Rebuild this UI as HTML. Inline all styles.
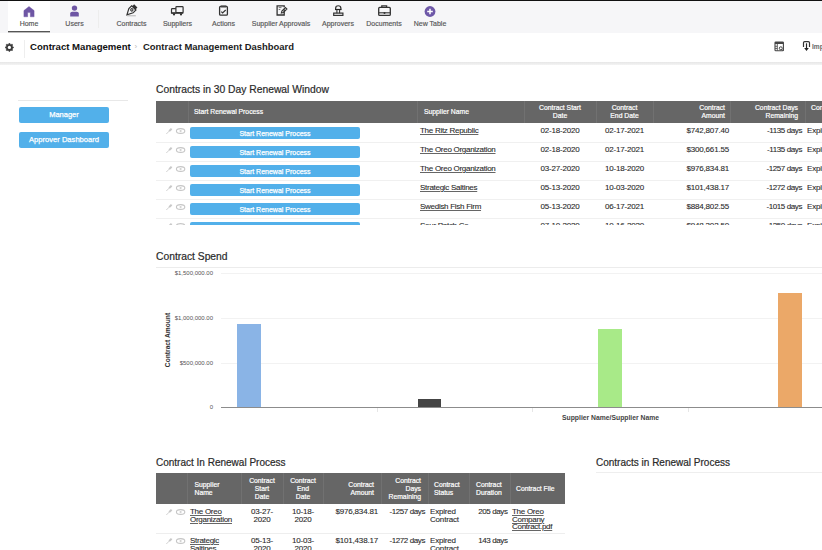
<!DOCTYPE html><html><head><meta charset="utf-8"><style>
*{box-sizing:border-box;margin:0;padding:0}
html,body{width:822px;height:550px;overflow:hidden;background:#fff;font-family:"Liberation Sans",sans-serif;color:#333}
.a{position:absolute}
.nt{position:absolute;font-size:7px;color:#555;-webkit-text-stroke:0.15px #555;white-space:nowrap;text-align:center;width:80px;margin-left:-40px;top:20px;line-height:8px}
.title{position:absolute;font-size:10.3px;color:#2a2a2a;white-space:nowrap;line-height:12px;-webkit-text-stroke:0.2px #2a2a2a}
.btn{position:absolute;background:#52b0ea;color:#fff;border-radius:2px;text-align:center;white-space:nowrap;-webkit-text-stroke:0.25px #fff}
.c{position:absolute;font-size:8px;letter-spacing:-0.18px;color:#2a2a2a;white-space:nowrap;line-height:8px;-webkit-text-stroke:0.1px #2a2a2a}
.d{letter-spacing:-0.4px}
.hc{position:absolute;font-size:6.8px;color:#fff;white-space:nowrap;line-height:8px;-webkit-text-stroke:0.2px #fff}
.u{text-decoration:underline;text-decoration-color:#666;letter-spacing:-0.28px}
.r{text-align:right}
.ctr{text-align:center}
.ax{position:absolute;font-size:6px;color:#555;white-space:nowrap;line-height:7px;text-align:right;width:60px}
</style></head><body>
<div class="a" style="left:0;top:0;width:822px;height:1px;background:#111"></div>
<div class="a" style="left:0;top:1px;width:822px;height:32px;background:#f6f6f8"></div>
<div class="a" style="left:8px;top:1px;width:42px;height:32px;background:#fff"></div>
<div class="a" style="left:8px;top:31px;width:42px;height:1px;background:#555"></div>
<div class="a" style="left:8px;top:32px;width:42px;height:1px;background:#bbb"></div>

<svg class="a" style="left:0;top:0" width="460" height="20" viewBox="0 0 460 20">
<path d="M29 6.4 L34.1 10.6 V16.8 H30.3 V12.6 H27.7 V16.8 H23.9 V10.6 Z" fill="#6e56a4" stroke="#6e56a4" stroke-width="0.4" stroke-linejoin="round"/>
<circle cx="74.5" cy="8.1" r="2.7" fill="#6e56a4"/>
<path d="M70.2 16.4 V13.6 Q70.2 11.8 72.2 11.8 H76.8 Q78.8 11.8 78.8 13.6 V16.4 Z" fill="#6e56a4"/>
<g transform="translate(131.4 10.3) rotate(45)" fill="none" stroke="#333" stroke-width="1.2">
<rect x="-2.3" y="-6.2" width="4.6" height="2.6" fill="#333" stroke="none"/>
<path d="M-3 -3.4 H3 V0.6 L0 6.3 L-3 0.6 Z"/>
<circle cx="0" cy="-0.6" r="1.2" stroke-width="1"/>
</g>
<path d="M127.2 15.8 H135.8" stroke="#aaa" stroke-width="0.9"/>
<rect x="175.9" y="6.7" width="7.2" height="6" rx="0.8" fill="none" stroke="#333" stroke-width="1.2"/>
<path d="M175.9 8.7 H172.3 Q171.5 8.7 171.5 9.5 V13 H175.9" fill="none" stroke="#333" stroke-width="1.2"/>
<rect x="171.3" y="12.4" width="12" height="1.4" fill="#333"/>
<circle cx="174" cy="14.4" r="1.1" fill="#333"/><circle cx="181" cy="14.4" r="1.1" fill="#333"/>
<rect x="219.6" y="6.4" width="7.8" height="8.8" rx="1" fill="none" stroke="#333" stroke-width="1.3"/>
<rect x="220.6" y="5.5" width="5.8" height="1.9" rx="0.5" fill="#444"/>
<path d="M221.3 11.6 L222.6 12.9 L225.7 10" fill="none" stroke="#333" stroke-width="1.2"/>
<path d="M284.2 9.2 V15 H277.1 V5.9 H284.2 V7.2" fill="none" stroke="#333" stroke-width="1.3"/>
<path d="M278.7 7.6 H281.5 M278.7 9.5 H280.3" stroke="#666" stroke-width="0.9"/>
<path d="M281.4 13 L281.9 11 L285.4 7.5 L286.9 9 L283.4 12.5 Z" fill="none" stroke="#333" stroke-width="1.1"/>
<path d="M335.6 9.4 V8.4 A2.65 2.65 0 0 1 340.9 8.4 V9.4" fill="none" stroke="#333" stroke-width="1.2"/>
<path d="M335 9.5 H341.5" stroke="#222" stroke-width="1.2"/>
<path d="M336.9 9.8 V13.2 M339.6 9.8 V13.2" stroke="#333" stroke-width="1.1"/>
<rect x="333.7" y="13.1" width="9.2" height="2.3" fill="none" stroke="#333" stroke-width="1.2"/>
<rect x="378.7" y="7.4" width="11.6" height="8" rx="1" fill="none" stroke="#333" stroke-width="1.3"/>
<path d="M381.8 7.4 V5.9 H386.6 V7.4" fill="none" stroke="#333" stroke-width="1.3"/>
<path d="M378.7 12.8 H390.3" stroke="#333" stroke-width="1.1"/>
<circle cx="384.5" cy="13" r="1" fill="#333"/>
<circle cx="430" cy="11.5" r="5.4" fill="#6e58a8"/>
<path d="M430 8.7 V14.3 M427.2 11.5 H432.8" stroke="#fff" stroke-width="1.5"/>
</svg>
<div class="a" style="left:98px;top:10px;width:1px;height:18px;background:#ededed"></div>

<div class="nt" style="left:29px">Home</div>
<div class="nt" style="left:74.5px">Users</div>
<div class="nt" style="left:131.5px">Contracts</div>
<div class="nt" style="left:177.5px">Suppliers</div>
<div class="nt" style="left:223.5px">Actions</div>
<div class="nt" style="left:281px">Supplier Approvals</div>
<div class="nt" style="left:338px">Approvers</div>
<div class="nt" style="left:384px">Documents</div>
<div class="nt" style="left:430px">New Table</div>
<div class="a" style="left:0;top:62px;width:822px;height:3px;background:linear-gradient(#e6e6e6,#f4f4f4)"></div>
<svg class="a" style="left:0;top:0" width="20" height="60" viewBox="0 0 20 60"><path d="M9.40 43.00 L8.16 44.40 L6.29 44.29 L6.40 46.16 L5.00 47.40 L6.40 48.64 L6.29 50.51 L8.16 50.40 L9.40 51.80 L10.64 50.40 L12.51 50.51 L12.40 48.64 L13.80 47.40 L12.40 46.16 L12.51 44.29 L10.64 44.40 Z" fill="#3a3a3a" stroke="#3a3a3a" stroke-width="0.5" stroke-linejoin="round"/><circle cx="9.4" cy="47.4" r="1.6" fill="#fff"/></svg>
<div class="a" style="left:24px;top:40px;width:1px;height:18px;background:#eee"></div>
<div class="a" style="left:30px;top:41px;font-size:9.6px;font-weight:bold;color:#111;white-space:nowrap;line-height:12px">Contract Management</div>
<div class="a" style="left:134.5px;top:41px;font-size:8px;color:#bbb;line-height:12px">›</div>
<div class="a" style="left:143px;top:41px;font-size:9.45px;font-weight:bold;color:#1c1c1c;white-space:nowrap;line-height:12px">Contract Management Dashboard</div>
<svg class="a" style="left:0;top:0" width="822" height="60" viewBox="0 0 822 60"><rect x="775" y="42" width="8.4" height="8.8" rx="0.8" fill="none" stroke="#444" stroke-width="1.1"/><rect x="775" y="42" width="8.4" height="2" fill="#444"/><path d="M777.3 44 V50.8 M775 46.3 H777.3 M775 48.5 H777.3" stroke="#555" stroke-width="0.9"/><circle cx="780.8" cy="48.3" r="1.5" fill="#fff" stroke="#444" stroke-width="1"/><path d="M781.9 49.4 L783.4 50.9" stroke="#444" stroke-width="1"/><path d="M803.5 47 V42.8 Q803.5 41.6 804.7 41.6 H808.3 Q809.5 41.6 809.5 42.8 V47" fill="none" stroke="#333" stroke-width="1.2"/><path d="M806.5 43.3 V49" stroke="#222" stroke-width="1.2"/><path d="M804.2 48 L806.5 51 L808.8 48 Z" fill="#222"/></svg>
<div class="a" style="left:812px;top:42px;font-size:6.6px;font-weight:bold;color:#666;white-space:nowrap;line-height:9px">Imp</div>
<div class="a" style="left:18px;top:100px;width:110px;height:1px;background:#e8e8e8"></div>
<div class="btn" style="left:19px;top:107px;width:90px;height:16px;line-height:16px;font-size:7.5px">Manager</div>
<div class="btn" style="left:19px;top:132px;width:90px;height:16px;line-height:16px;font-size:7.6px">Approver Dashboard</div>
<div class="title" style="left:156px;top:84px">Contracts in 30 Day Renewal Window</div>
<div class="a" style="left:0;top:0;width:822px;height:225px;overflow:hidden">
<div class="a" style="left:156px;top:101px;width:666px;height:22px;background:#666"></div>
<div class="a" style="left:188px;top:101px;width:1px;height:22px;background:#717171"></div>
<div class="a" style="left:417px;top:101px;width:1px;height:22px;background:#717171"></div>
<div class="a" style="left:524px;top:101px;width:1px;height:22px;background:#717171"></div>
<div class="a" style="left:596px;top:101px;width:1px;height:22px;background:#717171"></div>
<div class="a" style="left:653px;top:101px;width:1px;height:22px;background:#717171"></div>
<div class="a" style="left:730px;top:101px;width:1px;height:22px;background:#717171"></div>
<div class="a" style="left:805px;top:101px;width:1px;height:22px;background:#717171"></div>
<div class="hc" style="left:194px;top:108px">Start Renewal Process</div>
<div class="hc" style="left:424px;top:108px">Supplier Name</div>
<div class="hc ctr" style="left:524px;width:72px;top:104px">Contract Start<br>Date</div>
<div class="hc ctr" style="left:596px;width:57px;top:104px">Contract<br>End Date</div>
<div class="hc r" style="left:653px;width:72px;top:104px">Contract<br>Amount</div>
<div class="hc r" style="left:730px;width:68px;top:104px">Contract Days<br>Remaining</div>
<div class="hc" style="left:811px;top:104px">Contract</div>
<div class="a" style="left:156px;top:142px;width:666px;height:1px;background:#f0f0f0"></div>
<svg class="a" style="left:165px;top:127px" width="22" height="8" viewBox="0 0 22 8"><path d="M1.3 7 L6.5 1.8" stroke="#d2d2d2" stroke-width="1"/><path d="M4.2 4.1 L6.6 1.7" stroke="#c8c8c8" stroke-width="2"/><ellipse cx="15.6" cy="4" rx="4.2" ry="2.4" fill="none" stroke="#c6c6c6" stroke-width="1.1"/><circle cx="15.6" cy="4" r="1.1" fill="#d0d0d0"/></svg>
<div class="btn" style="left:190px;top:127px;width:170px;height:12px;line-height:13px;font-size:7px">Start Renewal Process</div>
<div class="c u" style="left:420px;top:127px">The Ritz Republic</div>
<div class="c ctr" style="left:524px;width:72px;top:127px">02-18-2020</div>
<div class="c ctr" style="left:596px;width:57px;top:127px">02-17-2021</div>
<div class="c r" style="left:653px;width:76px;top:127px">$742,807.40</div>
<div class="c r d" style="left:730px;width:72px;top:127px">-1135 days</div>
<div class="c" style="left:807px;top:127px">Expired</div>
<div class="a" style="left:156px;top:161px;width:666px;height:1px;background:#f0f0f0"></div>
<svg class="a" style="left:165px;top:146px" width="22" height="8" viewBox="0 0 22 8"><path d="M1.3 7 L6.5 1.8" stroke="#d2d2d2" stroke-width="1"/><path d="M4.2 4.1 L6.6 1.7" stroke="#c8c8c8" stroke-width="2"/><ellipse cx="15.6" cy="4" rx="4.2" ry="2.4" fill="none" stroke="#c6c6c6" stroke-width="1.1"/><circle cx="15.6" cy="4" r="1.1" fill="#d0d0d0"/></svg>
<div class="btn" style="left:190px;top:146px;width:170px;height:12px;line-height:13px;font-size:7px">Start Renewal Process</div>
<div class="c u" style="left:420px;top:146px">The Oreo Organization</div>
<div class="c ctr" style="left:524px;width:72px;top:146px">02-18-2020</div>
<div class="c ctr" style="left:596px;width:57px;top:146px">02-17-2021</div>
<div class="c r" style="left:653px;width:76px;top:146px">$300,661.55</div>
<div class="c r d" style="left:730px;width:72px;top:146px">-1135 days</div>
<div class="c" style="left:807px;top:146px">Expired</div>
<div class="a" style="left:156px;top:180px;width:666px;height:1px;background:#f0f0f0"></div>
<svg class="a" style="left:165px;top:165px" width="22" height="8" viewBox="0 0 22 8"><path d="M1.3 7 L6.5 1.8" stroke="#d2d2d2" stroke-width="1"/><path d="M4.2 4.1 L6.6 1.7" stroke="#c8c8c8" stroke-width="2"/><ellipse cx="15.6" cy="4" rx="4.2" ry="2.4" fill="none" stroke="#c6c6c6" stroke-width="1.1"/><circle cx="15.6" cy="4" r="1.1" fill="#d0d0d0"/></svg>
<div class="btn" style="left:190px;top:165px;width:170px;height:12px;line-height:13px;font-size:7px">Start Renewal Process</div>
<div class="c u" style="left:420px;top:165px">The Oreo Organization</div>
<div class="c ctr" style="left:524px;width:72px;top:165px">03-27-2020</div>
<div class="c ctr" style="left:596px;width:57px;top:165px">10-18-2020</div>
<div class="c r" style="left:653px;width:76px;top:165px">$976,834.81</div>
<div class="c r d" style="left:730px;width:72px;top:165px">-1257 days</div>
<div class="c" style="left:807px;top:165px">Expired</div>
<div class="a" style="left:156px;top:199px;width:666px;height:1px;background:#f0f0f0"></div>
<svg class="a" style="left:165px;top:184px" width="22" height="8" viewBox="0 0 22 8"><path d="M1.3 7 L6.5 1.8" stroke="#d2d2d2" stroke-width="1"/><path d="M4.2 4.1 L6.6 1.7" stroke="#c8c8c8" stroke-width="2"/><ellipse cx="15.6" cy="4" rx="4.2" ry="2.4" fill="none" stroke="#c6c6c6" stroke-width="1.1"/><circle cx="15.6" cy="4" r="1.1" fill="#d0d0d0"/></svg>
<div class="btn" style="left:190px;top:184px;width:170px;height:12px;line-height:13px;font-size:7px">Start Renewal Process</div>
<div class="c u" style="left:420px;top:184px">Strategic Saltines</div>
<div class="c ctr" style="left:524px;width:72px;top:184px">05-13-2020</div>
<div class="c ctr" style="left:596px;width:57px;top:184px">10-03-2020</div>
<div class="c r" style="left:653px;width:76px;top:184px">$101,438.17</div>
<div class="c r d" style="left:730px;width:72px;top:184px">-1272 days</div>
<div class="c" style="left:807px;top:184px">Expired</div>
<div class="a" style="left:156px;top:218px;width:666px;height:1px;background:#f0f0f0"></div>
<svg class="a" style="left:165px;top:203px" width="22" height="8" viewBox="0 0 22 8"><path d="M1.3 7 L6.5 1.8" stroke="#d2d2d2" stroke-width="1"/><path d="M4.2 4.1 L6.6 1.7" stroke="#c8c8c8" stroke-width="2"/><ellipse cx="15.6" cy="4" rx="4.2" ry="2.4" fill="none" stroke="#c6c6c6" stroke-width="1.1"/><circle cx="15.6" cy="4" r="1.1" fill="#d0d0d0"/></svg>
<div class="btn" style="left:190px;top:203px;width:170px;height:12px;line-height:13px;font-size:7px">Start Renewal Process</div>
<div class="c u" style="left:420px;top:203px">Swedish Fish Firm</div>
<div class="c ctr" style="left:524px;width:72px;top:203px">05-13-2020</div>
<div class="c ctr" style="left:596px;width:57px;top:203px">06-17-2021</div>
<div class="c r" style="left:653px;width:76px;top:203px">$884,802.55</div>
<div class="c r d" style="left:730px;width:72px;top:203px">-1015 days</div>
<div class="c" style="left:807px;top:203px">Expired</div>
<div class="a" style="left:156px;top:237px;width:666px;height:1px;background:#f0f0f0"></div>
<svg class="a" style="left:165px;top:222px" width="22" height="8" viewBox="0 0 22 8"><path d="M1.3 7 L6.5 1.8" stroke="#d2d2d2" stroke-width="1"/><path d="M4.2 4.1 L6.6 1.7" stroke="#c8c8c8" stroke-width="2"/><ellipse cx="15.6" cy="4" rx="4.2" ry="2.4" fill="none" stroke="#c6c6c6" stroke-width="1.1"/><circle cx="15.6" cy="4" r="1.1" fill="#d0d0d0"/></svg>
<div class="btn" style="left:190px;top:222px;width:170px;height:12px;line-height:13px;font-size:7px">Start Renewal Process</div>
<div class="c u" style="left:420px;top:222px">Sour Patch Co</div>
<div class="c ctr" style="left:524px;width:72px;top:222px">07-10-2020</div>
<div class="c ctr" style="left:596px;width:57px;top:222px">10-16-2020</div>
<div class="c r" style="left:653px;width:76px;top:222px">$948,302.50</div>
<div class="c r d" style="left:730px;width:72px;top:222px">-1250 days</div>
<div class="c" style="left:807px;top:222px">Expired</div>
</div>
<div class="title" style="left:156px;top:251px">Contract Spend</div>
<div class="a" style="left:156px;top:267px;width:666px;height:1px;background:#ececec"></div>
<div class="ax" style="left:153px;top:269.5px">$1,500,000.00</div>
<div class="a" style="left:221px;top:273px;width:601px;height:1px;background:#f2f2f2"></div>
<div class="ax" style="left:153px;top:314.5px">$1,000,000.00</div>
<div class="a" style="left:221px;top:318px;width:601px;height:1px;background:#f2f2f2"></div>
<div class="ax" style="left:153px;top:359.5px">$500,000.00</div>
<div class="a" style="left:221px;top:363px;width:601px;height:1px;background:#f2f2f2"></div>
<div class="ax" style="left:153px;top:404.0px">0</div>
<div class="a" style="left:221px;top:407px;width:601px;height:1px;background:#8c8c8c"></div>
<div class="a" style="left:376.5px;top:408px;width:1px;height:4px;background:#e6e6e6"></div>
<div class="a" style="left:532px;top:408px;width:1px;height:4px;background:#e6e6e6"></div>
<div class="a" style="left:687.5px;top:408px;width:1px;height:4px;background:#e6e6e6"></div>
<div class="a" style="left:168px;top:340px;width:0;height:0"><div style="position:absolute;transform:translate(-50%,-50%) rotate(-90deg);font-size:6.7px;font-weight:bold;color:#333;white-space:nowrap;line-height:8px">Contract Amount</div></div>
<div class="a" style="left:237px;top:323.5px;width:24px;height:83.5px;background:#8ab4e6"></div>
<div class="a" style="left:418px;top:399px;width:23px;height:8px;background:#444"></div>
<div class="a" style="left:598px;top:328.5px;width:24px;height:78.5px;background:#a8ea88"></div>
<div class="a" style="left:778px;top:293px;width:24px;height:114px;background:#eba868"></div>
<div class="a" style="left:562px;top:414px;font-size:6.8px;font-weight:bold;color:#444;white-space:nowrap;line-height:8px">Supplier Name/Supplier Name</div>
<div class="title" style="left:156px;top:457px;font-size:10px">Contract In Renewal Process</div>
<div class="a" style="left:156px;top:473px;width:409px;height:31px;background:#666"></div>
<div class="a" style="left:187px;top:473px;width:1px;height:31px;background:#717171"></div>
<div class="a" style="left:241px;top:473px;width:1px;height:31px;background:#717171"></div>
<div class="a" style="left:283px;top:473px;width:1px;height:31px;background:#717171"></div>
<div class="a" style="left:323px;top:473px;width:1px;height:31px;background:#717171"></div>
<div class="a" style="left:381px;top:473px;width:1px;height:31px;background:#717171"></div>
<div class="a" style="left:428px;top:473px;width:1px;height:31px;background:#717171"></div>
<div class="a" style="left:469px;top:473px;width:1px;height:31px;background:#717171"></div>
<div class="a" style="left:510px;top:473px;width:1px;height:31px;background:#717171"></div>
<div class="hc" style="left:194.5px;top:481px">Supplier<br>Name</div>
<div class="hc ctr" style="left:241px;width:42px;top:477px">Contract<br>Start<br>Date</div>
<div class="hc ctr" style="left:283px;width:40px;top:477px">Contract<br>End<br>Date</div>
<div class="hc r" style="left:323px;width:51px;top:481px">Contract<br>Amount</div>
<div class="hc r" style="left:381px;width:40px;top:477px">Contract<br>Days<br>Remaining</div>
<div class="hc" style="left:434px;top:481px">Contract<br>Status</div>
<div class="hc" style="left:476px;top:481px">Contract<br>Duration</div>
<div class="hc" style="left:516px;top:485px">Contract File</div>
<svg class="a" style="left:165px;top:508px" width="22" height="8" viewBox="0 0 22 8"><path d="M1.3 7 L6.5 1.8" stroke="#d2d2d2" stroke-width="1"/><path d="M4.2 4.1 L6.6 1.7" stroke="#c8c8c8" stroke-width="2"/><ellipse cx="15.6" cy="4" rx="4.2" ry="2.4" fill="none" stroke="#c6c6c6" stroke-width="1.1"/><circle cx="15.6" cy="4" r="1.1" fill="#d0d0d0"/></svg>
<div class="c u" style="left:190px;top:508px;line-height:7.5px">The Oreo<br>Organization</div>
<div class="c ctr" style="left:241px;width:42px;top:508px;line-height:7.5px">03-27-<br>2020</div>
<div class="c ctr" style="left:283px;width:40px;top:508px;line-height:7.5px">10-18-<br>2020</div>
<div class="c r" style="left:323px;width:55px;top:508px">$976,834.81</div>
<div class="c r d" style="left:381px;width:44px;top:508px">-1257 days</div>
<div class="c" style="left:430px;top:508px;line-height:7.5px">Expired<br>Contract</div>
<div class="c r d" style="left:469px;width:38.5px;top:508px">205 days</div>
<div class="c u" style="left:512px;top:508px;line-height:7.5px">The Oreo<br>Company<br>Contract.pdf</div>
<svg class="a" style="left:165px;top:537px" width="22" height="8" viewBox="0 0 22 8"><path d="M1.3 7 L6.5 1.8" stroke="#d2d2d2" stroke-width="1"/><path d="M4.2 4.1 L6.6 1.7" stroke="#c8c8c8" stroke-width="2"/><ellipse cx="15.6" cy="4" rx="4.2" ry="2.4" fill="none" stroke="#c6c6c6" stroke-width="1.1"/><circle cx="15.6" cy="4" r="1.1" fill="#d0d0d0"/></svg>
<div class="c u" style="left:190px;top:537px;line-height:7.5px">Strategic<br>Saltines</div>
<div class="c ctr" style="left:241px;width:42px;top:537px;line-height:7.5px">05-13-<br>2020</div>
<div class="c ctr" style="left:283px;width:40px;top:537px;line-height:7.5px">10-03-<br>2020</div>
<div class="c r" style="left:323px;width:55px;top:537px">$101,438.17</div>
<div class="c r d" style="left:381px;width:44px;top:537px">-1272 days</div>
<div class="c" style="left:430px;top:537px;line-height:7.5px">Expired<br>Contract</div>
<div class="c r d" style="left:469px;width:38.5px;top:537px">143 days</div>
<div class="a" style="left:156px;top:533px;width:409px;height:1px;background:#eee"></div>
<div class="title" style="left:596px;top:457px;font-size:10px">Contracts in Renewal Process</div>
<div class="a" style="left:596px;top:472px;width:226px;height:1px;background:#eee"></div>
</body></html>
